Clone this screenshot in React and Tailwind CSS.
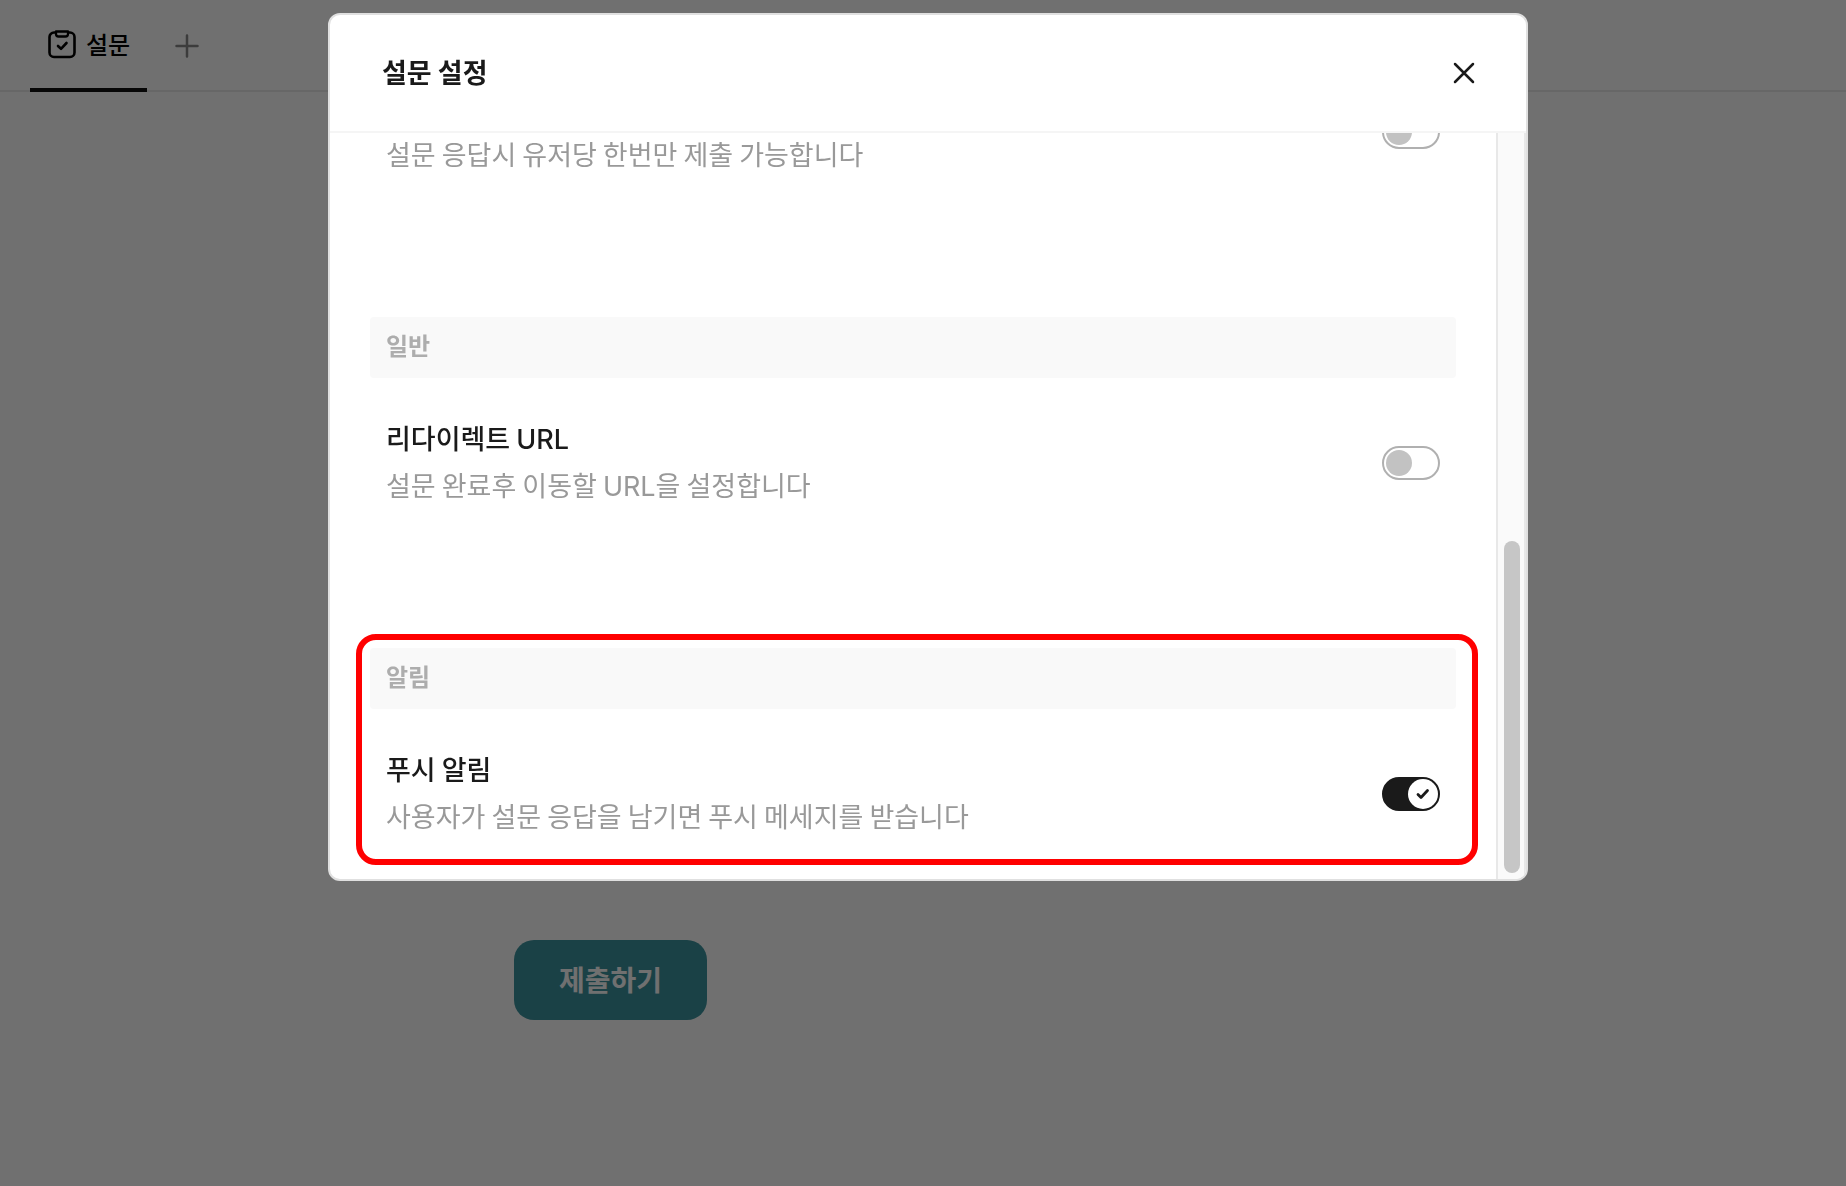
import React, { useState } from "react";

const ClipboardCheckIcon = () => (
  <svg width="28" height="30" viewBox="0 0 28 30" fill="none" stroke="currentColor" strokeWidth="2.600" strokeLinecap="round" strokeLinejoin="round">
    <path d="M7 3.500H6A4.500 4.500 0 0 0 1.500 8V23.500A4.500 4.500 0 0 0 6 28H22A4.500 4.500 0 0 0 26.500 23.500V8A4.500 4.500 0 0 0 22 3.500H21" />
    <path d="M8 2.500H20V5A2.500 2.500 0 0 1 17.500 7.500H10.500A2.500 2.500 0 0 1 8 5Z" strokeWidth="2.300" />
    <path d="M10 17L13 19.800L18.500 14" />
  </svg>
);

const PlusIcon = () => (
  <svg width="24" height="24" viewBox="0 0 24 24" fill="none" stroke="currentColor" strokeWidth="2.500" strokeLinecap="round">
    <path d="M12 1.500V22.500M1.500 12H22.500" />
  </svg>
);

const CloseIcon = () => (
  <svg width="22" height="22" viewBox="0 0 22 22" fill="none" stroke="currentColor" strokeWidth="2.500" strokeLinecap="round">
    <path d="M2 2L20 20M20 2L2 20" />
  </svg>
);

const Toggle = ({ id, checked, onChange }) => (
  <label htmlFor={id} className="relative block h-[34px] w-[58px] shrink-0 cursor-pointer">
    <input
      id={id}
      type="checkbox"
      role="switch"
      checked={checked}
      onChange={onChange}
      className="h-[34px] w-[58px] appearance-none rounded-full border-2 border-[#b0b0b0] bg-white checked:border-[#1a1a1a] checked:bg-[#1a1a1a]"
    />
    {checked ? (
      <span className="pointer-events-none absolute top-[2px] right-[2px] flex size-[30px] items-center justify-center rounded-full bg-white text-[#1a1a1a]">
        <svg width="14" height="12" viewBox="0 0 14 12" fill="none" stroke="currentColor" strokeWidth="2.800" strokeLinecap="round" strokeLinejoin="round">
          <path d="M2 6.500L5 9.500L11.500 2.500" />
        </svg>
      </span>
    ) : (
      <span className="pointer-events-none absolute top-[4px] left-[4px] size-[26px] rounded-full bg-[#c2c2c2]" />
    )}
  </label>
);

const SettingRow = ({ id, title, description, checked, onChange }) => (
  <div className="flex items-center justify-between px-4 py-10">
    <label htmlFor={id} className="flex flex-col gap-[7px] pb-[3px] text-[27px] leading-[40px]">
      <span className="h-[40px] font-medium text-[#1a1a1a]">{title}</span>
      <span className="h-[40px] text-[#999999]">{description}</span>
    </label>
    <Toggle id={id} checked={checked} onChange={onChange} />
  </div>
);

const SectionTitle = ({ children }) => (
  <h3 className="h-[61px] rounded-sm bg-[#f9f9f9] px-4 text-[24px] leading-[56px] font-bold text-[#adadad]">
    {children}
  </h3>
);

const Latin = ({ children }) => <span className="font-['Inter',sans-serif] leading-none">{children}</span>;

const App = () => {
  const [settings, setSettings] = useState({ once: false, redirect: false, push: true });

  const toggle = (name) => () => setSettings((prev) => ({ ...prev, [name]: !prev[name] }));

  return (
    <div className="min-h-screen bg-white font-['Noto_Sans_CJK_KR',sans-serif]">
      <nav className="flex h-[92px] items-stretch border-b-2 border-[#ebebeb] pl-[30px]">
        <button type="button" className="-mb-[2px] flex items-center gap-[10px] border-b-4 border-[#111111] pr-[17px] pl-[18px] text-[24px] font-medium text-black">
          <ClipboardCheckIcon />
          설문
        </button>
        <button type="button" aria-label="추가" className="ml-[28px] pt-[2px] text-[#888888]">
          <PlusIcon />
        </button>
      </nav>

      <main className="pt-[848px] pl-[514px]">
        <button type="button" className="h-[80px] w-[193px] rounded-[20px] bg-[#3d949f] pb-[2px] text-[28px] font-bold text-white">
          제출하기
        </button>
      </main>

      <div className="fixed inset-0 flex items-start justify-center bg-black/56 pt-[13px] pl-[10px]">
        <div role="dialog" aria-labelledby="dialog-title" className="w-full max-w-[1200px] overflow-hidden rounded-xl border-2 border-[#e0e0e0] bg-white">
          <header className="flex h-[118px] items-center justify-between border-b-2 border-[#f5f5f5] pr-[51px] pl-[52px]">
            <h2 id="dialog-title" className="pb-[2px] text-[27px] font-bold text-[#1a1a1a]">설문 설정</h2>
            <button type="button" aria-label="닫기" className="text-[#1a1a1a]">
              <CloseIcon />
            </button>
          </header>

          <div className="flex h-[746px]">
            <div className="flex flex-1 flex-col justify-end gap-[100px] overflow-hidden px-10">
              <SettingRow
                id="once"
                description="설문 응답시 유저당 한번만 제출 가능합니다"
                checked={settings.once}
                onChange={toggle("once")}
              />
              <section>
                <SectionTitle>일반</SectionTitle>
                <SettingRow
                  id="redirect"
                  title={<>리다이렉트 <Latin>URL</Latin></>}
                  description={<>설문 완료후 이동할 <Latin>URL</Latin>을 설정합니다</>}
                  checked={settings.redirect}
                  onChange={toggle("redirect")}
                />
              </section>
              <section className="relative">
                <SectionTitle>알림</SectionTitle>
                <SettingRow
                  id="push"
                  title="푸시 알림"
                  description="사용자가 설문 응답을 남기면 푸시 메세지를 받습니다"
                  checked={settings.push}
                  onChange={toggle("push")}
                />
                <div className="pointer-events-none absolute -top-[14px] -right-[22px] bottom-[14px] -left-[14px] rounded-[20px] border-6 border-[#ff0000]" />
              </section>
            </div>
            <div className="flex w-[30px] flex-col justify-end border-x-2 border-[#e8e8e8] bg-[#fafafa] pb-[6px] pl-[6px]">
              <div className="h-[332px] w-4 rounded-full bg-[#c6c6c6]" />
            </div>
          </div>
        </div>
      </div>
    </div>
  );
};

export default App;
